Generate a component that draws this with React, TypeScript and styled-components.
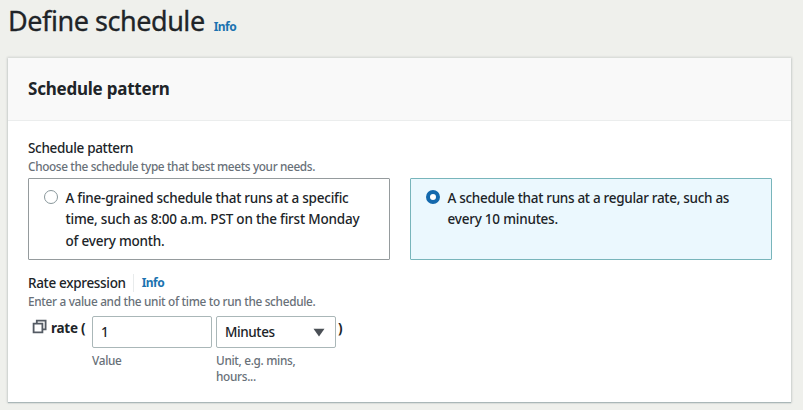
import React from "react";
import styled, { createGlobalStyle } from "styled-components";

const GlobalStyle = createGlobalStyle`
  * { box-sizing: border-box; }
  body {
    margin: 0;
    background: #eff0ec;
    color: #202428;
    font-family: "Noto Sans", "Open Sans", sans-serif;
    font-size: 13px;
  }
`;

const Page = styled.main`
  height: 410px;
  padding: 0 11px 0 8px;
  overflow: hidden;
`;

const TitleBar = styled.header`
  display: flex;
  align-items: baseline;
  height: 58px;
  gap: 9px;
`;

const Title = styled.h1`
  margin: 0;
  font-size: 27px;
  line-height: 42px;
  font-weight: 500;
  letter-spacing: -0.45px;
  white-space: nowrap;
  -webkit-text-stroke: 0.3px #202428;
  font-weight: 400;
`;

const InfoLink = styled.a`
  color: #1a73b0;
  font-size: 12px;
  font-weight: 700;
  letter-spacing: -0.55px;
  text-decoration: none;
`;

const Card = styled.section`
  height: 344px;
  margin-right: 1px;
  background: #fff;
  box-shadow: 0 1px 1px #aab7b8, 0 0 2px 1px rgba(0, 28, 36, 0.12);
`;

const CardHeader = styled.div`
  display: flex;
  align-items: center;
  height: 63px;
  padding: 0 20px;
  background: #f9f9f9;
  border-bottom: 1px solid #ebeded;
`;

const CardTitle = styled.h2`
  margin: 0;
  font-size: 17px;
  line-height: 22px;
  font-weight: 700;
  letter-spacing: -0.23px;
`;

const CardBody = styled.div`
  padding: 17px 20px 0;
`;

const Label = styled.div`
  display: flex;
  align-items: center;
  height: 20px;
  font-size: 13.5px;
  line-height: 20px;
  font-weight: 500;
  letter-spacing: -0.32px;
`;

const Hint = styled.div<{ $spacing?: number }>`
  color: #687078;
  font-size: 11.8px;
  line-height: 16px;
  font-weight: 500;
  letter-spacing: ${(p) => p.$spacing ?? -0.31}px;
  white-space: nowrap;
`;

const Tiles = styled.div`
  display: grid;
  grid-template-columns: 362px 362px;
  gap: 20px;
  margin-top: 4px;
`;

const Tile = styled.label<{ $selected?: boolean }>`
  display: flex;
  gap: 7.5px;
  height: 82px;
  padding: 8px 15px;
  border: 1px solid ${(p) => (p.$selected ? "#78b5bb" : "#959b9d")};
  border-radius: 1px;
  background: ${(p) => (p.$selected ? "#ebf8fe" : "#fff")};
`;

const Radio = styled.span<{ $selected?: boolean }>`
  flex: none;
  width: 14px;
  height: 14px;
  margin-top: 3px;
  border: ${(p) => (p.$selected ? "4px solid #1469ad" : "1px solid #89979b")};
  border-radius: 50%;
  background: #fff;
`;

const TileText = styled.span`
  padding-top: 1px;
  font-size: 13.5px;
  line-height: 21.3px;
  font-weight: 500;
  white-space: nowrap;
`;

const Line = styled.span<{ $spacing?: number }>`
  display: block;
  letter-spacing: ${(p) => p.$spacing ?? -0.22}px;
`;

const LabelDivider = styled.span`
  width: 1px;
  height: 18px;
  margin: 0 8px 0 7px;
  background: #e8ebec;
`;

const RateField = styled.div`
  margin-top: 13px;
`;

const RateRow = styled.div`
  display: flex;
  align-items: flex-start;
  margin-top: 7px;
  padding-left: 4px;
`;

const CopyIcon = styled.svg`
  flex: none;
  width: 15px;
  height: 15px;
  margin: 3px 4px 0 0;
`;

const Code = styled.span<{ $width?: number }>`
  width: ${(p) => (p.$width ? `${p.$width}px` : "auto")};
  font-size: 13.5px;
  line-height: 24px;
  font-weight: 700;
  letter-spacing: -0.25px;
  white-space: nowrap;
`;

const Column = styled.div`
  width: 120px;
  margin-right: 4px;

  & + ${Code} {
    margin-left: -2px;
  }
`;

const Control = styled.div`
  display: flex;
  align-items: center;
  justify-content: space-between;
  height: 32px;
  margin-bottom: 4px;
  padding: 0 10px 0 8px;
  border: 1px solid #aab7b8;
  border-radius: 2px;
  font-size: 13.5px;
  font-weight: 500;
  letter-spacing: -0.4px;
`;

const Caret = styled.svg`
  width: 12px;
  height: 9px;
`;

export default function App() {
  return (
    <>
      <GlobalStyle />
      <Page>
        <TitleBar>
          <Title>Define schedule</Title>
          <InfoLink>Info</InfoLink>
        </TitleBar>
        <Card>
          <CardHeader>
            <CardTitle>Schedule pattern</CardTitle>
          </CardHeader>
          <CardBody>
            <Label>Schedule pattern</Label>
            <Hint $spacing={-0.36}>Choose the schedule type that best meets your needs.</Hint>
            <Tiles>
              <Tile>
                <Radio />
                <TileText>
                  <Line $spacing={-0.24}>A fine-grained schedule that runs at a specific</Line>
                  <Line $spacing={-0.2}>time, such as 8:00 a.m. PST on the first Monday</Line>
                  <Line $spacing={-0.2}>of every month.</Line>
                </TileText>
              </Tile>
              <Tile $selected>
                <Radio $selected />
                <TileText>
                  <Line $spacing={-0.3}>A schedule that runs at a regular rate, such as</Line>
                  <Line>every 10 minutes.</Line>
                </TileText>
              </Tile>
            </Tiles>
            <RateField>
              <Label>
                Rate expression
                <LabelDivider />
                <InfoLink>Info</InfoLink>
              </Label>
              <Hint>Enter a value and the unit of time to run the schedule.</Hint>
              <RateRow>
                <CopyIcon viewBox="0 0 15 15" fill="none" stroke="#545b64" strokeWidth="1.8">
                  <path d="M1.6 4.6h8.8v8.8H1.6z" />
                  <path d="M4.8 4.6V1.6h8.8v8.8h-3.2" />
                </CopyIcon>
                <Code $width={41}>rate (</Code>
                <Column>
                  <Control>1</Control>
                  <Hint>Value</Hint>
                </Column>
                <Column>
                  <Control>
                    Minutes
                    <Caret viewBox="0 0 12 9">
                      <path d="M0.5 0.8h11L6 8.6z" fill="#4b5056" />
                    </Caret>
                  </Control>
                  <Hint>
                    Unit, e.g. mins,
                    <br />
                    hours...
                  </Hint>
                </Column>
                <Code>)</Code>
              </RateRow>
            </RateField>
          </CardBody>
        </Card>
      </Page>
    </>
  );
}
